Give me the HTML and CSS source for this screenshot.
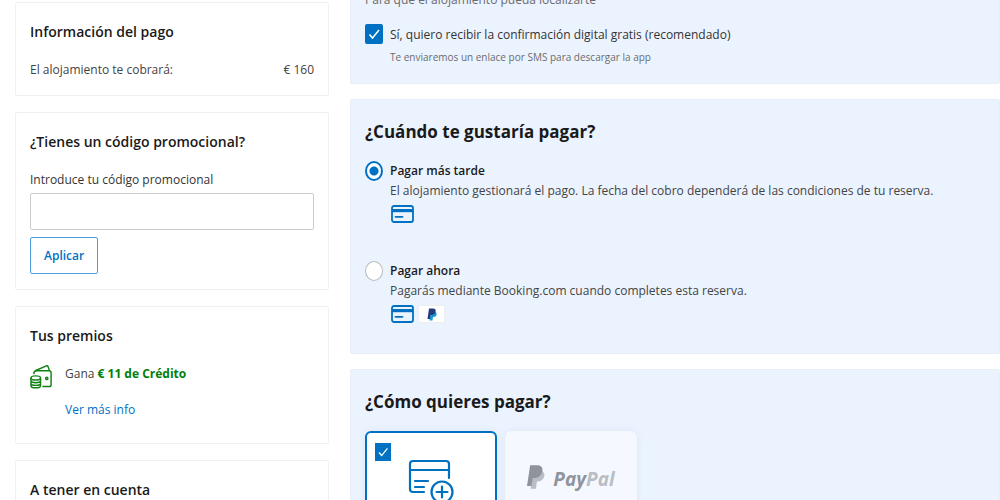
FILE: index.html
```html
<!DOCTYPE html>
<html lang="es">
<head>
<meta charset="utf-8">
<meta name="viewport" content="width=device-width, initial-scale=1">
<title>Información del pago</title>
<link rel="stylesheet" href="styles.css">
</head>
<body>
<svg class="defs" aria-hidden="true">
  <symbol id="card" viewBox="0 0 24 20">
    <rect x="2" y="2" width="21" height="16" rx="2" fill="none" stroke="#0071c2" stroke-width="1.8"/>
    <path d="M2 5h21v3.2H2z" fill="#0071c2"/>
    <path d="M5.500 12.800h7" stroke="#0071c2" stroke-width="1.8" stroke-linecap="round"/>
  </symbol>
</svg>
<div class="page">
  <aside class="sidebar">
    <section class="box">
      <h2 class="box-title">Información del pago</h2>
      <div class="price-row"><span>El alojamiento te cobrará:</span><span>€ 160</span></div>
    </section>
    <section class="box promo">
      <h2 class="box-title">¿Tienes un código promocional?</h2>
      <label class="promo-label" for="promo">Introduce tu código promocional</label>
      <input class="promo-input" id="promo" type="text">
      <button class="promo-button" type="button">Aplicar</button>
    </section>
    <section class="box rewards">
      <h2 class="box-title">Tus premios</h2>
      <div class="reward">
        <svg class="wallet" viewBox="0 0 24 26" fill="none" stroke="#128212" stroke-width="1.5" stroke-linecap="round" stroke-linejoin="round" aria-hidden="true">
          <path d="M4 9.500C4 7.500 5 6.500 7 6.500h13q2 0 2 2v12.500q0 2-2 2h-6.500"/>
          <path d="M6 6.200L17 1.300q1.300-.5 1.800.8l1.400 4"/>
          <circle cx="17.500" cy="14.500" r="1.200"/>
          <ellipse cx="6" cy="14" rx="5" ry="2.200"/>
          <path d="M1 14v8c0 3 10 3 10 0v-8M1 16.700c0 3 10 3 10 0M1 19.500c0 3 10 3 10 0"/>
        </svg>
        <div class="reward-text">
          <span>Gana <strong>€ 11 de Crédito</strong></span>
          <a class="more" href="#info">Ver más info</a>
        </div>
      </div>
    </section>
    <section class="box">
      <h2 class="box-title">A tener en cuenta</h2>
    </section>
  </aside>

  <main class="content">
    <section class="panel contact">
      <p class="help">Para que el alojamiento pueda localizarte</p>
      <div class="option">
        <input class="check" type="checkbox" id="sms" checked>
        <div class="option-body">
          <label class="sms-label" for="sms">Sí, quiero recibir la confirmación digital gratis (recomendado)</label>
          <p class="note">Te enviaremos un enlace por SMS para descargar la app</p>
        </div>
      </div>
    </section>
    <section class="panel timing">
      <h2 class="panel-title">¿Cuándo te gustaría pagar?</h2>
      <div class="option">
        <input class="radio" type="radio" name="when" id="later" checked>
        <div class="option-body">
          <label class="option-name" for="later">Pagar más tarde</label>
          <p>El alojamiento gestionará el pago. La fecha del cobro dependerá de las condiciones de tu reserva.</p>
          <div class="methods"><svg class="card-icon" aria-hidden="true"><use href="#card"/></svg></div>
        </div>
      </div>
      <div class="option">
        <input class="radio" type="radio" name="when" id="now">
        <div class="option-body">
          <label class="option-name" for="now">Pagar ahora</label>
          <p>Pagarás mediante Booking.com cuando completes esta reserva.</p>
          <div class="methods">
            <svg class="card-icon" aria-hidden="true"><use href="#card"/></svg>
            <span class="pp-chip"><svg class="pp-small" viewBox="0 0 20 26" aria-hidden="true"><path d="M8 7h7c4 1 5 4 4 7s-4 4-7 4l-1 7H5z" fill="#179bd7"/><path d="M4 1h8c5 0 6 3 5 7s-4 6-8 6H7l-1 8H1z" fill="#253b80"/></svg></span>
          </div>
        </div>
      </div>
    </section>
    <section class="panel">
      <h2 class="panel-title">¿Cómo quieres pagar?</h2>
      <div class="tiles">
        <label class="tile selected">
          <input class="check tile-check" type="checkbox" aria-label="Tarjeta" checked>
          <svg class="new-card" viewBox="0 0 46 48" fill="none" stroke="#0071c2" stroke-width="2.200" stroke-linecap="round" aria-hidden="true">
            <path d="M14 33H5q-3 0-3-3V5q0-3 3-3h33q3 0 3 3v14M2 11h39M7 22h13M7 28h9M7 33h9"/>
            <circle cx="34" cy="33" r="10.500"/>
            <path d="M34 27.500v11M28.500 33h11"/>
          </svg>
        </label>
        <button class="tile paypal" type="button">
          <svg class="pp-large" viewBox="0 0 20 26" aria-hidden="true"><path d="M8 6h8c3 1 4 4 3 7s-4 5-7 5h-1l-1 8H4z" fill="#b9bdc4"/><path d="M3.500 0H11c5 0 7 3 6 7s-4 7-8 7H6.500L5 23H0z" fill="#8f949c"/></svg>
          <span class="pp-word">Pay<span class="pp-pal">Pal</span></span>
        </button>
      </div>
    </section>
  </main>
</div>
</body>
</html>
```
FILE: styles.css
```css
* { box-sizing: border-box; }
body {
  margin: 0;
  height: 100vh;
  overflow: hidden;
  background: #fff;
  color: #444;
  font: 12px/20px "Open Sans", "Noto Sans", sans-serif;
}
h2, p { margin: 0; }
.defs { position: absolute; width: 0; height: 0; }
.page {
  display: grid;
  grid-template-columns: 314px minmax(0, 1fr);
  gap: 21px;
  padding-left: 15px;
}
.sidebar, .content { display: flex; flex-direction: column; }
.sidebar { gap: 16px; padding-top: 2px; }
.content { gap: 15px; margin-top: -11px; }
.box { border: 1px solid #f0f0f0; border-radius: 2px; padding: 19px 14px 15px; }
.box-title { color: #1a1a1a; font-size: 14px; line-height: 20px; font-weight: 600; margin-bottom: 18px; }
.price-row { display: flex; justify-content: space-between; }
.promo { padding-bottom: 15px; }
.promo-label { display: block; color: #333; font-weight: 500; margin-bottom: 3px; }
.promo-input { display: block; width: 100%; height: 37px; border: 1px solid #ccc; border-radius: 2px; padding: 0 8px; font: inherit; margin-bottom: 7px; }
.promo-button { height: 37px; padding: 0 13px; border: 1px solid #4aa0dc; border-radius: 2px; background: #fff; color: #0071c2; font: inherit; font-weight: 600; }
.rewards { padding-bottom: 23px; }
.reward { display: flex; gap: 12px; }
.wallet { width: 23px; height: 26px; }
.reward-text { display: flex; flex-direction: column; gap: 16px; }
.reward strong { color: #008009; font-weight: 700; }
.more { color: #0071c2; font-weight: 500; text-decoration: none; }
.panel { background: #ebf3ff; border: 1px solid #e8eef6; border-radius: 2px; padding: 20px 14px; }
.contact { padding-top: 0; padding-bottom: 15px; }
.help { color: #6b6b6b; margin-bottom: 14px; }
.option { display: flex; align-items: flex-start; gap: 7px; }
.sms-label { display: block; color: #333; line-height: 22px; }
.note { color: #6b6b6b; font-size: 10px; line-height: 22px; }
.panel-title { color: #1a1a1a; font-size: 17px; line-height: 24px; font-weight: 700; margin-bottom: 17px; }
.timing { padding-bottom: 14px; }
.option-name { display: block; color: #1a1a1a; font-weight: 600; }
.methods { display: flex; align-items: center; gap: 4px; height: 26px; margin-bottom: 34px; }
.timing .option:last-child .methods { margin-bottom: 12px; }
.card-icon { width: 24px; height: 20px; }
.pp-chip { display: grid; place-items: center; width: 27px; height: 18px; background: #fff; border: 1px solid #eee; border-radius: 2px; }
.pp-small { width: 10px; height: 13px; }
.check, .radio { appearance: none; flex: none; margin: 0; width: 18px; height: 20px; }
.check { border-radius: 2px; background: #0071c2 url("data:image/svg+xml,%3Csvg xmlns='http://www.w3.org/2000/svg' viewBox='0 0 18 20'%3E%3Cpath d='M4.500 10.500l3 3.500L14 6' fill='none' stroke='%23fff' stroke-width='1.500'/%3E%3C/svg%3E") center / contain no-repeat; }
.radio { border: 1px solid #bbb; border-radius: 50%; background: #fff; }
.radio:checked { border: 2px solid #0071c2; background: radial-gradient(circle, #0071c2 4px, #fff 5px); }
.tiles { display: flex; gap: 8px; }
.tile { width: 132px; height: 110px; border: 1px solid #f4f7fc; border-radius: 6px; background: #f5f9ff; box-shadow: 0 0 6px #dbe5f2; display: flex; justify-content: center; padding: 0; font: inherit; }
.selected { position: relative; border: 2px solid #0071c2; background: #fff; padding-top: 26px; }
.tile-check { position: absolute; left: 8px; top: 10px; width: 16px; height: 18px; border-radius: 0; }
.new-card { width: 46px; height: 48px; }
.paypal { gap: 8px; padding-top: 32px; align-items: flex-start; }
.pp-large { width: 18px; height: 26px; }
.pp-word { color: #8f949c; font-size: 19px; line-height: 30px; font-weight: 700; font-style: italic; }
.pp-pal { color: #b9bdc4; }
```
